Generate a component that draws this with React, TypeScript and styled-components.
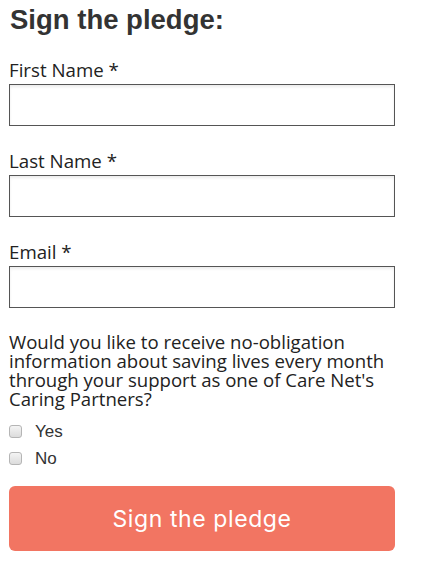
import styled, { createGlobalStyle } from "styled-components";

const GlobalStyle = createGlobalStyle`
  body {
    margin: 0;
    background: #ffffff;
  }
`;

const Form = styled.form`
  display: flex;
  flex-direction: column;
  padding: 4px 9px 20px 9px;
  width: 386px;
  font-family: "Open Sans", sans-serif;
  color: #222;
`;

const Heading = styled.h2`
  margin: 0 0 21px 1px;
  font-family: "Liberation Sans", Arial, sans-serif;
  font-size: 27.5px;
  line-height: 32px;
  font-weight: bold;
  color: #333;
`;

const Field = styled.div`
  display: flex;
  flex-direction: column;
  gap: 2px;
  margin-bottom: 22px;
`;

const Label = styled.label`
  font-size: 18.7px;
  line-height: 25px;
  color: #222;
`;

const TextInput = styled.input`
  box-sizing: border-box;
  width: 386px;
  height: 42px;
  margin: 0;
  border: 1px solid #555;
  border-radius: 0;
  box-shadow: inset 0 2px 3px rgba(0, 0, 0, 0.08);
  font-size: 16px;
  padding: 0 8px;
`;

const Question = styled.p`
  margin: 2px 0 0 0;
  font-size: 18.6px;
  line-height: 19px;
  color: #222;
`;

const Options = styled.div`
  display: flex;
  flex-direction: column;
  margin: 10px 0 14px 0;
`;

const Option = styled.label`
  display: flex;
  align-items: center;
  height: 27px;
  font-family: "Liberation Sans", Arial, sans-serif;
  font-size: 17px;
  color: #333;
`;

const Box = styled.input`
  box-sizing: border-box;
  appearance: none;
  width: 13px;
  height: 13px;
  margin: 0 13px 0 0;
  border: 1px solid #b5b5b5;
  border-radius: 3px;
  background: linear-gradient(#f4f4f4, #dcdcdc);
`;

const Submit = styled.button`
  width: 386px;
  height: 65px;
  border: none;
  border-radius: 6px;
  background: #f27562;
  color: #fff;
  font-family: Inter, "Open Sans", sans-serif;
  font-size: 23px;
  letter-spacing: 0.6px;
  font-weight: 400;
  cursor: pointer;
`;

const fields = ["First Name", "Last Name", "Email"];

const App = () => {
  return (
    <>
      <GlobalStyle />
      <Form onSubmit={(e) => e.preventDefault()}>
        <Heading>Sign the pledge:</Heading>
        {fields.map((name) => (
          <Field key={name}>
            <Label>{name} *</Label>
            <TextInput type={name === "Email" ? "email" : "text"} />
          </Field>
        ))}
        <Question>
          Would you like to receive no-obligation information about saving
          lives every month through your support as one of Care Net's Caring
          Partners?
        </Question>
        <Options>
          <Option>
            <Box type="checkbox" />
            Yes
          </Option>
          <Option>
            <Box type="checkbox" />
            No
          </Option>
        </Options>
        <Submit type="submit">Sign the pledge</Submit>
      </Form>
    </>
  );
};

export default App;
